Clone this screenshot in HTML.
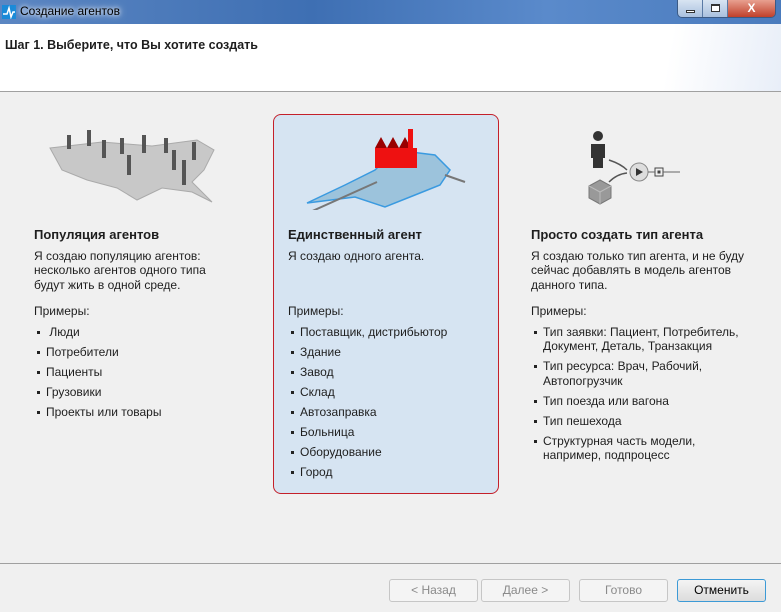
<!DOCTYPE html>
<html><head><meta charset="utf-8"><style>
*{margin:0;padding:0;box-sizing:border-box}
body{width:781px;height:612px;overflow:hidden;background:#f0f0f0;font-family:"Liberation Sans",sans-serif;font-size:12px;color:#1e1e1e;position:relative}
.tb{position:absolute;left:0;top:0;width:781px;height:24px;background:linear-gradient(90deg,#5b86c2,#3e6fb3 40%,#5a8acb 70%,#4a7bbd);}
.tb .t{position:absolute;left:20px;top:4px;color:#000;font-size:12px;text-shadow:0 0 8px #fff,0 0 4px #fff}
.hdr{position:absolute;left:0;top:24px;width:781px;height:68px;background:linear-gradient(100deg,#fff 85%,#e8eef8);border-bottom:1px solid #a0a0a0}
.hdr b{position:absolute;left:5px;top:14px;font-size:12.5px}
.col{position:absolute;top:228px;line-height:14.5px}
.col h3{font-size:13px;margin-bottom:6px}
.col .ex{margin-top:12px;margin-bottom:6px}
.col ul{list-style:none}
.col li{padding-left:12px;position:relative;margin-bottom:5.5px}
.col li:before{content:"";position:absolute;left:3px;top:6px;width:3px;height:3px;background:#222}
.mid{position:absolute;left:273px;top:114px;width:226px;height:380px;background:#d6e4f2;border:1px solid #c4202a;border-radius:8px}
.sep{position:absolute;left:0;top:563px;width:781px;border-top:1px solid #a0a0a0}
.btn{position:absolute;top:579px;height:23px;border:1px solid #c6c6c6;border-radius:3px;background:#f4f4f4;color:#8a8a8a;text-align:center;line-height:21px;font-size:12px}
</style></head><body>
<div class="tb"><svg style="position:absolute;left:2px;top:5px" width="14" height="14"><rect width="14" height="14" fill="#1a8ad8"/><path d="M1 9 L5 9 L7 3 L9 12 L11 7 L13 7" stroke="#fff" stroke-width="1.5" fill="none"/></svg><span class="t">Создание агентов</span>
<div style="position:absolute;left:677px;top:0;width:99px;height:18px;border:1px solid #3b5a85;border-top:none;border-radius:0 0 5px 5px;overflow:hidden;display:flex">
<div style="width:25px;background:linear-gradient(#d8e4f2,#a9c0de);border-right:1px solid #5a7aa5;position:relative"><div style="position:absolute;left:8px;top:10px;width:9px;height:3px;border:1px solid #333;background:#fff"></div></div>
<div style="width:25px;background:linear-gradient(#d8e4f2,#a9c0de);border-right:1px solid #5a7aa5;position:relative"><div style="position:absolute;left:8px;top:4px;width:9px;height:8px;border:1px solid #333;border-top-width:2px;background:#fff"></div></div>
<div style="flex:1;background:linear-gradient(#e8a090,#c0402a);color:#fff;font-weight:bold;text-align:center;line-height:16px">X</div></div></div>
<div class="hdr"><b>Шаг 1. Выберите, что Вы хотите создать</b></div>
<svg style="position:absolute;left:42px;top:130px" width="180" height="80"><path d="M8 18 L60 12 L110 16 L155 10 L172 20 L162 40 L150 52 L170 72 L150 62 L120 58 L95 70 L75 58 L45 50 L20 40 Z" fill="#c8c8c8" stroke="#aaa"/>
<g fill="#555"><rect x="25" y="5" width="4" height="14"/><rect x="45" y="0" width="4" height="16"/><rect x="60" y="10" width="4" height="18"/><rect x="78" y="8" width="4" height="16"/><rect x="100" y="5" width="4" height="18"/><rect x="85" y="25" width="4" height="20"/><rect x="130" y="20" width="4" height="20"/><rect x="150" y="12" width="4" height="18"/><rect x="140" y="30" width="4" height="25"/><rect x="122" y="8" width="4" height="15"/></g></svg>
<div class="mid"></div>
<svg style="position:absolute;left:305px;top:125px" width="165" height="85"><path d="M2 78 L40 60 L70 45 L90 25 L130 30 L145 45 L135 60 L110 70 L80 82 L50 72 Z" fill="#9cc3dc" stroke="#3a9ae0" stroke-width="1.5"/><path d="M3 88 L72 57 M140 50 L160 57" stroke="#777" stroke-width="2"/><rect x="70" y="23" width="42" height="20" fill="#e11"/><path d="M70 23 L76 12 L82 23 L88 12 L94 23 L100 12 L106 23" fill="#900"/><rect x="103" y="4" width="5" height="22" fill="#e11"/></svg>
<svg style="position:absolute;left:585px;top:130px" width="100" height="80"><path d="M8 6 a5 5 0 1 1 10 0 a5 5 0 1 1 -10 0 M6 14 h14 v14 h-2 v10 h-10 v-10 h-2 z" fill="#333"/><path d="M24 30 Q36 34 42 40 M24 52 Q32 44 42 43" stroke="#555" fill="none" stroke-width="1.5"/><circle cx="54" cy="42" r="9" fill="#ddd" stroke="#888"/><path d="M51 38 L58 42 L51 46 Z" fill="#333"/><rect x="70" y="38" width="8" height="8" fill="none" stroke="#444"/><rect x="72.5" y="40.5" width="3" height="3" fill="#444"/><path d="M63 42 H70 M78 42 H95" stroke="#666"/><path d="M4 56 L15 50 L26 56 L26 68 L15 74 L4 68 Z" fill="#999" stroke="#777"/><path d="M4 56 L15 62 L26 56 M15 62 V74" stroke="#bbb" fill="none"/></svg>
<div class="col" style="left:34px"><h3>Популяция агентов</h3>Я создаю популяцию агентов:<br>несколько агентов одного типа<br>будут жить в одной среде.<div class="ex">Примеры:</div><ul><li>&nbsp;Люди</li><li>Потребители</li><li>Пациенты</li><li>Грузовики</li><li>Проекты или товары</li></ul></div>
<div class="col" style="left:288px"><h3>Единственный агент</h3>Я создаю одного агента.<div class="ex" style="margin-top:41px">Примеры:</div><ul><li>Поставщик, дистрибьютор</li><li>Здание</li><li>Завод</li><li>Склад</li><li>Автозаправка</li><li>Больница</li><li>Оборудование</li><li>Город</li></ul></div>
<div class="col" style="left:531px"><h3>Просто создать тип агента</h3>Я создаю только тип агента, и не буду<br>сейчас добавлять в модель агентов<br>данного типа.<div class="ex">Примеры:</div><ul><li>Тип заявки: Пациент, Потребитель,<br>Документ, Деталь, Транзакция</li><li>Тип ресурса: Врач, Рабочий,<br>Автопогрузчик</li><li>Тип поезда или вагона</li><li>Тип пешехода</li><li>Структурная часть модели,<br>например, подпроцесс</li></ul></div>
<div class="sep"></div>
<div class="btn" style="left:389px;width:89px">&lt; Назад</div>
<div class="btn" style="left:481px;width:89px">Далее &gt;</div>
<div class="btn" style="left:579px;width:89px">Готово</div>
<div class="btn" style="left:677px;width:89px;border-color:#3c9ad6;color:#000;background:linear-gradient(#f4f4f4,#dcdcdc)">Отменить</div>
</body></html>
